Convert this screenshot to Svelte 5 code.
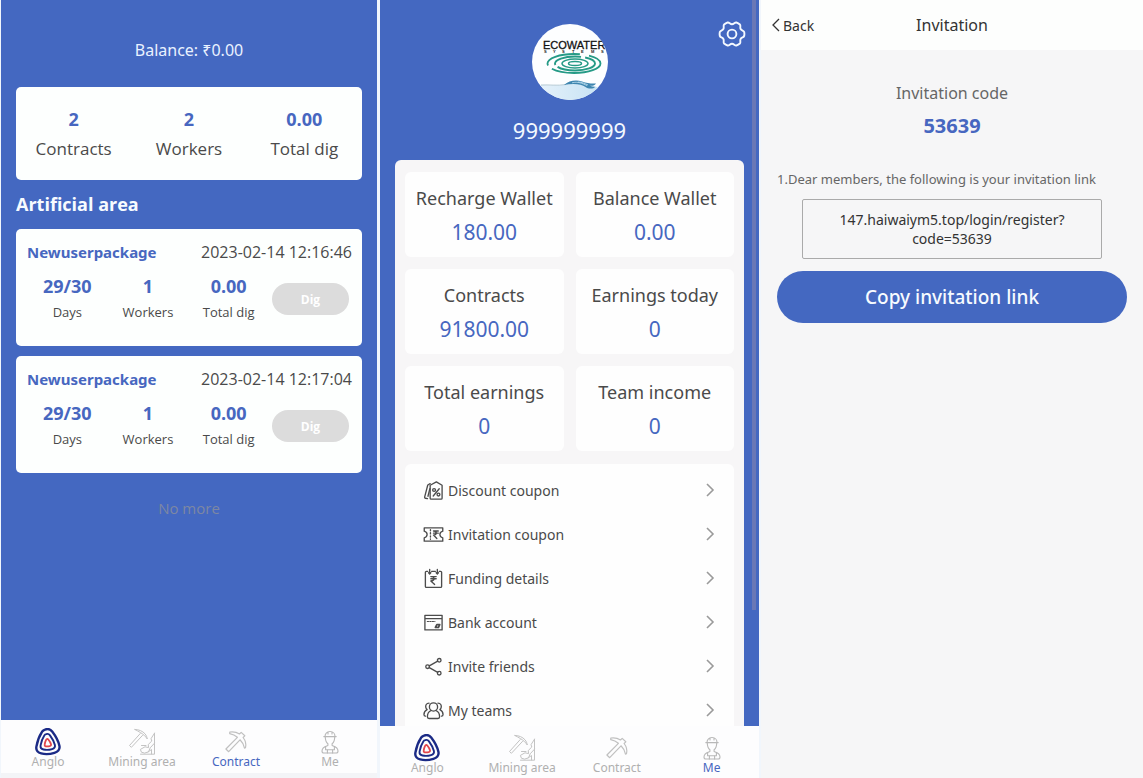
<script>
  const totals = [
    { value: '2', label: 'Contracts' },
    { value: '2', label: 'Workers' },
    { value: '0.00', label: 'Total dig' }
  ];

  const packages = [
    { name: 'Newuserpackage', time: '2023-02-14 12:16:46', days: '29/30', workers: '1', dig: '0.00' },
    { name: 'Newuserpackage', time: '2023-02-14 12:17:04', days: '29/30', workers: '1', dig: '0.00' }
  ];

  const wallets = [
    { label: 'Recharge Wallet', value: '180.00' },
    { label: 'Balance Wallet', value: '0.00' },
    { label: 'Contracts', value: '91800.00' },
    { label: 'Earnings today', value: '0' },
    { label: 'Total earnings', value: '0' },
    { label: 'Team income', value: '0' }
  ];

  const menu = [
    { icon: 'discount', label: 'Discount coupon' },
    { icon: 'ticket', label: 'Invitation coupon' },
    { icon: 'funding', label: 'Funding details' },
    { icon: 'bank', label: 'Bank account' },
    { icon: 'share', label: 'Invite friends' },
    { icon: 'team', label: 'My teams' }
  ];

  const tabs = ['Anglo', 'Mining area', 'Contract', 'Me'];
</script>

{#snippet tabIcon(name)}
  <svg class="tab-icon" viewBox="0 0 28 28" aria-hidden="true" fill="none" stroke-linejoin="round" stroke-linecap="round">
    {#if name === 'Anglo'}
      <g stroke="#1b2a86">
        <path stroke-width="2.400" d="M11 1.600c2.400-1 5.400-.3 7.200 2 3.200 4.200 6.200 9.600 7.200 14.200.8 3.600-1.400 5.800-5 7-4 1.300-9.200 1.700-13.200.6C3.400 24.400 1.800 22 2.400 18.600 3.300 13.400 5.600 7.400 8 3.800 8.800 2.700 9.800 2 11 1.600z" />
        <path stroke-width="1.900" d="M12.200 6.200c1.300-.6 2.800-.2 3.800 1.200 2.200 3 4.200 6.600 4.900 9.600.5 2.200-.6 3.400-2.800 4.100-2.600.8-6 1-8.600.4-2.300-.5-3.300-1.900-2.900-4.100.6-3.500 2-7.300 3.700-9.900.5-.7 1.100-1.100 1.900-1.300z" />
      </g>
      <path stroke="#e2464b" stroke-width="1.800" d="M12.600 11.200c.5-.4 1.200-.3 1.700.3 1.300 1.600 2.300 3.200 2.700 4.700.3 1.100-.3 1.700-1.300 1.900-1.200.3-2.600.4-3.700.2s-1.500-.9-1.300-1.900c.3-1.700.8-3.300 1.500-4.700z" />
    {:else if name === 'Mining area'}
      <g stroke="#c3c3c3" stroke-width="1">
        <path d="M7 1.500c4 0 7.500 1.500 10 4.300 1.300 1.600 2 3.300 2.300 5.200-2-3-4.300-5-7-6.500C10.500 3.500 9 2.500 7 1.500z" />
        <path d="M12.200 5.600L1.500 17.500l1.900 1.800L14.500 7.400" />
        <path d="M26.500 5.200v21H12.500" />
        <path d="M26.500 5.200l-3.500 5.500.8 2.300-3.600 3.600.4 3-3.600-.8-4.600 2.600 1 2.800 3.200.9 3.900-1.300 1.700-4 4.300-4.600M13.500 17.500h4.500M20 24l3.500-2.500v4.500" />
      </g>
    {:else if name === 'Contract'}
      <g stroke="#c0c0c0" stroke-width="1.200">
        <path d="M7.800 4c3.400-.5 7 .2 9.700 2l1.700-1.600 3.600 3.400-1.700 1.700c2.300 2.900 3.300 6.600 2.400 10.200l-1 .4c-.7-3.500-2.300-6.200-4.500-8.300L6.700 23.700 3.900 21 15.400 9.300C13.200 7.400 10.500 6.200 7.700 5.600z" />
      </g>
    {:else}
      <g stroke="#b8b8b8" stroke-width="1.100">
        <path d="M9 8.500C9 5.700 11.200 3.500 14 3.500s5 2.200 5 5M7.800 8.600h12.400M12 3.800V6M16 3.800V6" />
        <path d="M9.300 9c0 3 .8 5.400 2.600 6.800v1.700c-2.800.9-5.900 1.600-5.900 5.400 0 1.500.5 2.100 2 2.100h12c1.500 0 2-.6 2-2.100 0-3.800-3.100-4.500-5.900-5.400v-1.700c1.800-1.400 2.600-3.800 2.600-6.800" />
        <path d="M9.600 18.500v3.300h1.800V25M18.400 18.500v3.300h-1.800V25M11.500 21.800h5" />
      </g>
    {/if}
  </svg>
{/snippet}

{#snippet tabBar(active)}
  <nav class="tabs">
    {#each tabs as tab}
      <a href="#{tab.toLowerCase().replace(' ', '-')}" class:active={tab === active}>
        {@render tabIcon(tab)}
        <span>{tab}</span>
      </a>
    {/each}
  </nav>
{/snippet}

{#snippet menuIcon(name)}
  <svg class="menu-icon" viewBox="0 0 22 22" aria-hidden="true" fill="none" stroke="#4c4c4c" stroke-width="1.400" stroke-linejoin="round" stroke-linecap="round">
    {#if name === 'discount'}
      <path d="M7.500 5.500L14 2l6 3.500V19a1 1 0 0 1-1 1H8.500a1 1 0 0 1-1-1z" />
      <path d="M7.500 3.800L5 5.200 1.700 18c-.1.600.2 1 .8 1.100l2.200.4M5.200 17l2-8" />
      <path d="M17 9.200l-6.300 7.600" />
      <circle cx="11.600" cy="10.500" r="1.500" />
      <circle cx="16.200" cy="15.300" r="1.500" />
    {:else if name === 'ticket'}
      <path d="M1.300 4h19.400v3.500c-2 .6-3 1.800-3 3.500s1 2.900 3 3.500V18H1.300v-3.500c2-.6 3-1.800 3-3.500s-1-2.900-3-3.500z" />
      <path stroke-dasharray="1.200 2" d="M7.800 6v10" />
      <path d="M11 7.300h5M11 9.600h5M11 7.300c3.800 0 3.800 4.300 0 4.300l3.500 3.600" />
    {:else if name === 'funding'}
      <path d="M5 3.500H3.500A1 1 0 0 0 2.500 4.500v14.800a1 1 0 0 0 1 1h15a1 1 0 0 0 1-1V4.500a1 1 0 0 0-1-1H17M9 3.500h4M7 1.500V6M15 1.500V6M5.800 5L7 6.200 8.200 5M13.800 5L15 6.200 16.200 5" />
      <path d="M8.200 9h5.600M8.200 11.300h5.600M8.200 9c4.500 0 4.500 4.500 0 4.500l4 3.700" />
    {:else if name === 'bank'}
      <path d="M2 3.500h18v15.300H2zM2 7h18" />
      <path stroke-width="1.200" stroke-dasharray="1.300 1.300" d="M4.500 10h8" />
      <path stroke-width="1.800" d="M13 16.200h3.200l1.300-3h-3z" />
    {:else if name === 'share'}
      <path d="M6.600 10.300l8.800-4.900M6.600 12.200l8.800 4.900" />
      <circle cx="4.800" cy="11.200" r="1.900" />
      <circle cx="17" cy="4.500" r="1.900" />
      <circle cx="17" cy="18" r="1.900" />
    {:else}
      <circle cx="11" cy="7.300" r="4.300" />
      <path d="M8.500 11C5.700 12.200 4.600 14.500 4.600 17.500c0 1.300.5 1.900 1.700 1.900h9.400c1.200 0 1.700-.6 1.700-1.900 0-3-1.100-5.300-3.900-6.500" />
      <path d="M6.300 3.300C3.600 3.300 2.300 5.500 3 8c.2.900.7 1.500 1.300 2C2.100 11 1 13 1 15.200c0 1.100.5 1.700 1.600 1.700M15.700 3.300c2.700 0 4 2.200 3.300 4.700-.2.900-.7 1.500-1.300 2 2.200 1 3.300 3 3.300 5.200 0 1.100-.5 1.700-1.600 1.700" />
    {/if}
  </svg>
{/snippet}

<div class="board">
  <section class="screen contract">
    <div class="scroll">
      <p class="balance">Balance: ₹0.00</p>
      <div class="card totals">
        {#each totals as t}
          <div class="total"><strong>{t.value}</strong><span>{t.label}</span></div>
        {/each}
      </div>
      <h2>Artificial area</h2>
      <div class="packages">
        {#each packages as p}
          <article class="card package">
            <header><h3>{p.name}</h3><time>{p.time}</time></header>
            <div class="figures">
              <div><strong>{p.days}</strong><span>Days</span></div>
              <div><strong>{p.workers}</strong><span>Workers</span></div>
              <div><strong>{p.dig}</strong><span>Total dig</span></div>
              <button type="button" class="dig">Dig</button>
            </div>
          </article>
        {/each}
      </div>
      <p class="no-more">No more</p>
    </div>
    {@render tabBar('Contract')}
    <div class="strip"></div>
  </section>

  <section class="screen me">
    <div class="scroll">
      <div class="profile">
        <svg class="avatar" viewBox="0 0 76 76" role="img" aria-label="Ecowater Systems">
          <defs>
            <clipPath id="disc"><circle cx="38" cy="38" r="38" /></clipPath>
            <linearGradient id="water" x1="0" y1="0" x2="1" y2="0">
              <stop offset="0" stop-color="#e8f3fb" />
              <stop offset="1" stop-color="#c3e0f3" />
            </linearGradient>
          </defs>
          <g clip-path="url(#disc)">
            <rect width="76" height="76" fill="#fdfeff" />
            <text x="11" y="25" font-size="11" fill="#111" stroke="#111" stroke-width="0.300">ECOWATER</text>
            <text x="12 21 30 40 49 59 69" y="29" font-size="4" font-weight="700" fill="#222">SYSTEMS</text>
            <g fill="none" stroke="#259a86">
              <ellipse cx="42" cy="39.500" rx="26.500" ry="9.500" stroke-width="1.800" stroke-dasharray="52 5 38 9 20 3" />
              <ellipse cx="43" cy="39.500" rx="20" ry="7" stroke-width="1.900" stroke-dasharray="40 3 30 4" />
              <ellipse cx="43" cy="39.500" rx="13" ry="4.400" stroke-width="1.500" />
              <ellipse cx="43" cy="39.500" rx="6.500" ry="2" stroke-width="1.500" />
            </g>
            <path fill="url(#water)" d="M0 61c12-.5 22 1.500 32 0 8-1.500 14-3 24 1l20 2v14H0z" />
            <path fill="none" stroke="#8aa9b8" stroke-width="0.600" d="M9 61c8-.5 16 1 25-.5" />
            <path fill="#3f86b0" d="M32 61c5-4.500 12-5.500 18-3.500 5 1.700 9 2.300 14 2-1 2-3.500 2.500-6 2.200 2 1 4 1.300 5.500 1-2.500 2.500-7 2.500-10 .3-4-3-12-4-21.500-2z" />
            <path fill="none" stroke="#bfe0f0" stroke-width="0.800" d="M40 58.800c6-1.500 10 .5 15 2.700M46 58c4 .2 7 1.500 10 3" />
          </g>
        </svg>
        <p>999999999</p>
        <button type="button" class="settings" aria-label="Settings">
          <svg viewBox="0 0 28 28" aria-hidden="true" fill="none" stroke="#f4f9ff" stroke-width="1.900" stroke-linejoin="round">
            <path d="M9.600 2.500C11.300 2 11.900 4.200 14 4.200S16.700 2 18.400 2.500c1.300.4 2.500 1.100 3.500 2 1.200 1.200-.3 2.700.7 4.500s3.200 1.300 3.600 2.900c.3 1.400.3 2.800 0 4.200-.4 1.600-2.600 1.100-3.600 2.900s.5 3.300-.7 4.500c-1 .9-2.200 1.600-3.500 2-1.700.5-2.300-1.700-4.400-1.700s-2.700 2.200-4.400 1.700c-1.300-.4-2.500-1.100-3.500-2-1.200-1.200.3-2.700-.7-4.500s-3.200-1.300-3.600-2.900c-.3-1.400-.3-2.800 0-4.200.4-1.600 2.600-1.100 3.600-2.900s-.5-3.300.7-4.500c1-.9 2.200-1.600 3.500-2z" />
            <circle cx="14" cy="14" r="4.400" />
          </svg>
        </button>
      </div>
      <div class="sheet">
        <div class="wallets">
          {#each wallets as w}
            <div class="wallet"><span>{w.label}</span><strong>{w.value}</strong></div>
          {/each}
        </div>
        <ul class="menu">
          {#each menu as m}
            <li>
              <a href="#{m.icon}">
                {@render menuIcon(m.icon)}
                <span>{m.label}</span>
                <svg class="chevron" viewBox="0 0 10 14" aria-hidden="true" fill="none" stroke="#9a9a9a" stroke-width="1.600"><path d="M2 1l6 6-6 6" /></svg>
              </a>
            </li>
          {/each}
        </ul>
      </div>
      <div class="thumb"></div>
    </div>
    {@render tabBar('Me')}
  </section>

  <section class="screen invitation">
    <header class="bar">
      <a href="#back"><svg viewBox="0 0 8 14" aria-hidden="true" fill="none" stroke="#333" stroke-width="1.300"><path d="M7 1L1 7l6 6" /></svg>Back</a>
      <h1>Invitation</h1>
    </header>
    <div class="invite">
      <p class="code-label">Invitation code</p>
      <strong class="code">53639</strong>
      <p class="note">1.Dear members, the following is your invitation link</p>
      <p class="link">147.haiwaiym5.top/login/register?<wbr />code=53639</p>
      <button type="button" class="copy">Copy invitation link</button>
    </div>
  </section>
</div>

<style>
  :global(body) {
    background: #f1f6fc;
  }
  .board {
    display: grid;
    grid-template-columns: 378fr 379fr 382fr;
    gap: 2px;
    height: 100vh;
    min-height: 600px;
    font-family: "Noto Sans", "Open Sans", sans-serif;
    color: #4a4a4a;
  }
  .board :global(*) {
    box-sizing: border-box;
  }
  p, h1, h2, h3, ul {
    margin: 0;
    padding: 0;
  }
  a {
    color: inherit;
    text-decoration: none;
  }
  button {
    font-family: inherit;
    border: 0;
    padding: 0;
    cursor: pointer;
  }
  strong {
    color: #4767c0;
  }
  .screen {
    display: flex;
    flex-direction: column;
    min-width: 0;
    min-height: 0;
  }
  .scroll {
    position: relative;
    flex: 1;
    min-height: 0;
    overflow: hidden;
    padding: 0 15px;
    background: #4468c1;
  }

  .contract {
    padding: 0 1px;
  }
  .contract .scroll {
    font-family: "Open Sans", "Noto Sans", sans-serif;
  }
  .contract .balance {
    padding: 37px 0 24px;
    font-family: "Noto Sans", "Open Sans", sans-serif;
    font-size: 16px;
    line-height: 26px;
    text-align: center;
    color: #e9f2ff;
  }
  .card {
    background: #fdfffe;
    border-radius: 5px;
  }
  .totals {
    display: grid;
    grid-template-columns: repeat(3, 1fr);
    padding: 17px 0 16px;
    text-align: center;
    font-size: 17px;
    line-height: 30px;
  }
  .totals strong, .totals span, .figures strong, .figures span {
    display: block;
  }
  .totals strong {
    font-size: 18px;
  }
  h2 {
    font-size: 18px;
    line-height: 49px;
    color: #f7fbff;
  }
  .packages {
    display: grid;
    gap: 10px;
  }
  .package {
    padding: 11px 10px 21px 11px;
  }
  .package header {
    display: flex;
    justify-content: space-between;
    line-height: 24px;
  }
  h3 {
    font-family: "Noto Sans", "Open Sans", sans-serif;
    font-size: 15px;
    color: #4767c0;
  }
  time {
    font-size: 16px;
  }
  .figures {
    display: grid;
    grid-template-columns: repeat(3, 1fr) 80px;
    align-items: center;
    padding: 9px 3px 0 0;
    text-align: center;
    font-size: 13px;
    line-height: 26px;
  }
  .figures strong {
    font-size: 18px;
  }
  .dig {
    height: 32px;
    margin-left: 3px;
    border-radius: 16px;
    background: #dcdcdc;
    color: #fff;
    font-size: 12px;
    font-weight: 700;
  }
  .no-more {
    padding-top: 22px;
    font-size: 15px;
    line-height: 26px;
    text-align: center;
    color: #7d87a3;
  }
  .tabs {
    display: grid;
    grid-template-columns: repeat(4, 1fr);
    padding-bottom: 3px;
    background: #fdfdfe;
    font-size: 12px;
    line-height: 16px;
    color: #b0b0b0;
  }
  .tabs a {
    display: flex;
    flex-direction: column;
    align-items: center;
    padding-top: 8px;
  }
  .tabs .active {
    color: #4767c0;
  }
  .me .tabs {
    padding-bottom: 2px;
  }
  .tab-icon {
    width: 28px;
    height: 28px;
    margin-bottom: -2px;
  }
  .strip {
    height: 5px;
    background: #f3f4f7;
  }

  .profile {
    display: flex;
    flex-direction: column;
    align-items: center;
    padding-top: 24px;
    font-size: 22px;
    line-height: 60px;
    color: #f3f9ff;
  }
  .avatar {
    width: 76px;
    height: 76px;
    font-family: "Liberation Sans", sans-serif;
  }
  .settings {
    position: absolute;
    top: 20px;
    right: 13px;
    width: 28px;
    height: 28px;
    background: none;
  }
  .settings svg {
    display: block;
  }
  .sheet {
    padding: 12px 10px;
    border-radius: 6px;
    background: #f7f6f7;
  }
  .wallets {
    display: grid;
    grid-template-columns: repeat(2, 1fr);
    gap: 12px;
  }
  .wallet {
    display: grid;
    padding: 9px 0 8px;
    border-radius: 6px;
    background: #fefefe;
    text-align: center;
    font-size: 18px;
    line-height: 34px;
  }
  .wallet strong {
    font-size: 21px;
    font-weight: 400;
  }
  .menu {
    list-style: none;
    margin-top: 13px;
    padding: 4px 19px 4px 18px;
    border-radius: 6px;
    background: #fefefe;
  }
  .menu a {
    display: flex;
    align-items: center;
    gap: 4px;
    height: 44px;
    font-size: 14px;
  }
  .menu span {
    flex: 1;
  }
  .menu-icon {
    width: 21px;
    height: 21px;
  }
  .chevron {
    width: 10px;
    height: 14px;
  }
  .thumb {
    position: absolute;
    top: 0;
    right: 3px;
    width: 4px;
    height: 84%;
    background: #6a78b6;
  }

  .invitation {
    background: #f6f6f7;
  }
  .bar {
    display: grid;
    grid-template-columns: 1fr auto 1fr;
    align-items: center;
    height: 50px;
    padding: 0 11px;
    background: #fdfefd;
    color: #333;
  }
  .bar a {
    display: flex;
    align-items: center;
    gap: 3px;
    font-size: 14px;
  }
  .bar svg {
    width: 8px;
    height: 14px;
  }
  h1 {
    font-size: 16px;
    font-weight: 400;
  }
  .invite {
    display: flex;
    flex-direction: column;
    padding: 27px 16px 0;
    text-align: center;
  }
  .code-label {
    font-size: 16px;
    line-height: 32px;
    color: #666;
  }
  .code {
    font-size: 20px;
    line-height: 34px;
  }
  .note {
    padding: 24px 0 8px;
    font-size: 13px;
    line-height: 24px;
    text-align: left;
    color: #666;
  }
  .link {
    margin: 0 25px;
    padding: 10px 20px;
    border: 1px solid #aaa;
    border-radius: 2px;
    font-size: 14px;
    line-height: 19px;
    color: #333;
  }
  .copy {
    margin-top: 12px;
    height: 52px;
    border-radius: 26px;
    background: #4468c1;
    color: #f7fbff;
    font-size: 19px;
    font-weight: 500;
  }
</style>
